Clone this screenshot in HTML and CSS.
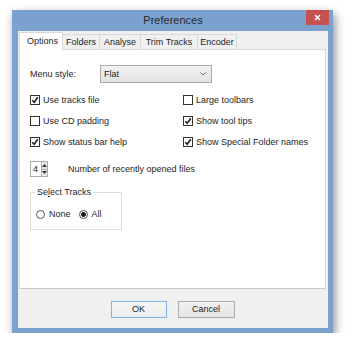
FILE: index.html
```html
<!DOCTYPE html>
<html>
<head>
    <title>Preferences</title>
    <meta charset="utf-8">
    <link rel="stylesheet" href="styles.css">
</head>
<body>
    <div class="window">
        <div class="titlebar">
            <span class="title">Preferences</span>
            <span class="close">
                <svg width="7" height="7" viewBox="0 0 7 7"><path d="M1 1L6 6M6 1L1 6" stroke="#fff" stroke-width="1.5"/></svg>
            </span>
        </div>
        <div class="client">
            <div class="tabs">
                <div class="tab selected w-options">Options</div>
                <div class="tab w-folders">Folders</div>
                <div class="tab w-analyse">Analyse</div>
                <div class="tab w-trim">Trim Tracks</div>
                <div class="tab w-encoder">Encoder</div>
            </div>
            <div class="panel">
                <div class="menurow">
                    <span class="label">Menu style:</span>
                    <div class="combo">
                        <span>Flat</span>
                        <svg width="6" height="4" viewBox="0 0 6 4"><path d="M0.5 0.5L3 3L5.5 0.5" stroke="#666" stroke-width="1" fill="none"/></svg>
                    </div>
                </div>
                <div class="checks">
                    <div class="check"><span class="box"><svg width="8" height="8" viewBox="0 0 8 8"><path d="M1.2 4.2L3.2 6.3L6.8 1.2" stroke="#222" stroke-width="1.6" fill="none"/></svg></span>Use tracks file</div>
                    <div class="check"><span class="box"></span>Large toolbars</div>
                    <div class="check"><span class="box"></span>Use CD padding</div>
                    <div class="check"><span class="box"><svg width="8" height="8" viewBox="0 0 8 8"><path d="M1.2 4.2L3.2 6.3L6.8 1.2" stroke="#222" stroke-width="1.6" fill="none"/></svg></span>Show tool tips</div>
                    <div class="check"><span class="box"><svg width="8" height="8" viewBox="0 0 8 8"><path d="M1.2 4.2L3.2 6.3L6.8 1.2" stroke="#222" stroke-width="1.6" fill="none"/></svg></span>Show status bar help</div>
                    <div class="check"><span class="box"><svg width="8" height="8" viewBox="0 0 8 8"><path d="M1.2 4.2L3.2 6.3L6.8 1.2" stroke="#222" stroke-width="1.6" fill="none"/></svg></span>Show Special Folder names</div>
                </div>
                <div class="spinrow">
                    <div class="spinner">
                        <span class="value">4</span>
                        <span class="arrows">
                            <span class="arr"><svg width="5" height="3" viewBox="0 0 5 3"><path d="M0 3L2.5 0L5 3Z" fill="#333"/></svg></span>
                            <span class="arr"><svg width="5" height="3" viewBox="0 0 5 3"><path d="M0 0L2.5 3L5 0Z" fill="#333"/></svg></span>
                        </span>
                    </div>
                    <span class="spinlabel">Number of recently opened files</span>
                </div>
                <div class="group">
                    <span class="legend">Se<u>l</u>ect Tracks</span>
                    <div class="radios">
                        <div class="radio"><span class="circle"></span>None</div>
                        <div class="radio"><span class="circle on"></span>All</div>
                    </div>
                </div>
            </div>
            <div class="footer">
                <div class="button default">OK</div>
                <div class="button">Cancel</div>
            </div>
        </div>
    </div>
</body>
</html>
```

FILE: styles.css
```css
body {
    margin: 0;
    padding: 10px 0 0 12px;
    background-color: #ffffff;
    font-family: "Liberation Sans", Arial, sans-serif;
    font-size: 9px;
    color: #1e1e1e;
}
.window {
    width: 321px;
    height: 323px;
    box-sizing: border-box;
    background-color: #7ba2cf;
    padding: 0 5px 5px 6px;
    display: flex;
    flex-direction: column;
    box-shadow: 2px 4px 9px rgba(0, 0, 0, 0.45);
}
.titlebar {
    height: 21px;
    display: grid;
    grid-template-columns: 1fr auto 1fr;
}
.title {
    grid-column: 2;
    font-size: 11px;
    line-height: 21px;
    color: #2a2a2a;
}
.close {
    grid-column: 3;
    justify-self: end;
    margin-right: -1px;
    width: 23px;
    height: 15px;
    background-color: #c75050;
    display: flex;
    align-items: center;
    justify-content: center;
}
.client {
    flex: 1;
    background-color: #f0f0f0;
    padding: 1px 2px 0 1px;
    display: flex;
    flex-direction: column;
}
.tabs {
    height: 17px;
    display: flex;
    align-items: flex-end;
}
.tab {
    height: 15px;
    box-sizing: border-box;
    border: 1px solid #d9d9d9;
    border-bottom: 0;
    margin-left: -1px;
    background-color: #f0f0f0;
    text-align: center;
    line-height: 15px;
}
.tab.selected {
    margin-left: 0;
    height: 18px;
    margin-bottom: -1px;
    background-color: #ffffff;
    position: relative;
    z-index: 1;
    line-height: 17px;
    padding-left: 3px;
}
.w-options { width: 44px; }
.w-folders { width: 38px; }
.w-analyse { width: 42px; }
.w-trim { width: 58px; }
.w-encoder { width: 40px; }
.panel {
    height: 240px;
    box-sizing: border-box;
    background-color: #ffffff;
    border: 1px solid #d9d9d9;
    border-bottom-color: #cacaca;
    padding: 15px 0 0 10px;
}
.menurow {
    height: 18px;
    display: flex;
    align-items: center;
}
.label {
    width: 70px;
}
.combo {
    width: 112px;
    height: 18px;
    box-sizing: border-box;
    border: 1px solid #acacac;
    background: linear-gradient(#f2f2f2, #e3e3e3);
    display: flex;
    align-items: center;
    justify-content: space-between;
    padding: 0 5px 0 3px;
}
.checks {
    margin-top: 6px;
    display: grid;
    grid-template-columns: 153px auto;
    grid-auto-rows: 21px;
    align-items: center;
}
.check {
    display: flex;
    align-items: center;
    gap: 3px;
}
.box {
    width: 10px;
    height: 10px;
    box-sizing: border-box;
    border: 1px solid #333333;
    background-color: #ffffff;
    display: flex;
    align-items: center;
    justify-content: center;
}
.spinrow {
    margin-top: 9px;
    height: 16px;
    display: flex;
    align-items: center;
}
.spinner {
    width: 18px;
    height: 16px;
    display: flex;
}
.value {
    width: 11px;
    box-sizing: border-box;
    border: 1px solid #abadb3;
    border-right: 0;
    padding-left: 2px;
    line-height: 14px;
}
.arrows {
    width: 7px;
    display: flex;
    flex-direction: column;
}
.arr {
    flex: 1;
    box-sizing: border-box;
    border: 1px solid #adadad;
    background-color: #e6e6e6;
    display: flex;
    align-items: center;
    justify-content: center;
}
.arr + .arr {
    border-top: 0;
}
.spinlabel {
    margin-left: 20px;
}
.group {
    position: relative;
    margin-top: 15px;
    width: 92px;
    height: 38px;
    box-sizing: border-box;
    border: 1px solid #dcdcdc;
    padding: 15px 0 0 5px;
}
.legend {
    position: absolute;
    top: -6px;
    left: 4px;
    padding: 0 2px;
    background-color: #ffffff;
    line-height: 11px;
}
.legend u {
    text-decoration-thickness: 1px;
}
.radios {
    height: 12px;
    display: flex;
    align-items: center;
    gap: 8px;
}
.radio {
    display: flex;
    align-items: center;
    gap: 4px;
}
.circle {
    width: 9px;
    height: 9px;
    box-sizing: border-box;
    border: 1px solid #555555;
    border-radius: 50%;
    background-color: #ffffff;
}
.circle.on {
    background: radial-gradient(circle, #1a1a1a 0, #1a1a1a 2px, #ffffff 2.8px);
}
.footer {
    flex: 1;
    display: flex;
    justify-content: center;
    align-items: flex-start;
    gap: 11px;
    padding-top: 12px;
}
.button {
    width: 57px;
    height: 17px;
    box-sizing: border-box;
    border: 1px solid #acacac;
    background: linear-gradient(#f0f0f0, #e5e5e5);
    text-align: center;
    line-height: 15px;
}
.button.default {
    width: 56px;
    border-color: #7eb4ea;
    background: linear-gradient(#f6f6f6, #ececec);
}
```
